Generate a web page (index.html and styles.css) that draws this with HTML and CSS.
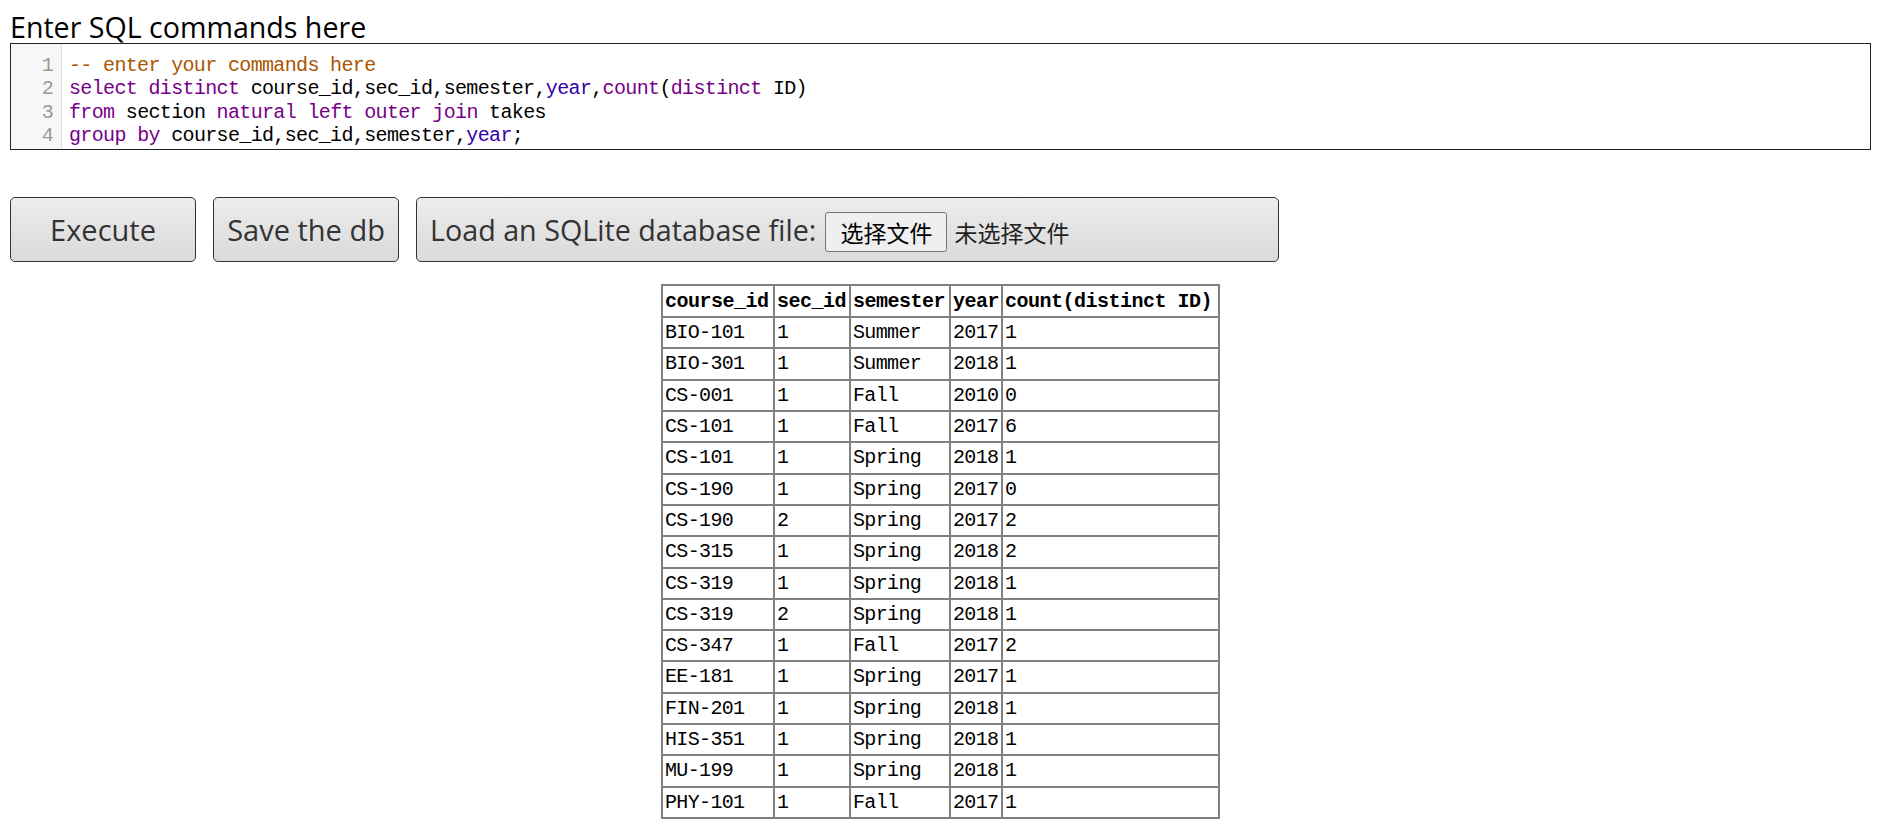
FILE: index.html
```html
<!DOCTYPE html>
<html lang="en">
<head>
<meta charset="utf-8">
<title>SQL runner</title>
<link rel="stylesheet" href="styles.css">
</head>
<body>
<label class="title" for="sql">Enter SQL commands here</label>
<div class="editor" id="sql">
  <div class="gutter">
    <div class="ln">1</div>
    <div class="ln">2</div>
    <div class="ln">3</div>
    <div class="ln">4</div>
  </div>
  <div class="code">
    <pre class="line"><span class="cm-comment">-- enter your commands here</span></pre>
    <pre class="line"><span class="cm-kw">select</span> <span class="cm-kw">distinct</span> course_id,sec_id,semester,<span class="cm-bi">year</span>,<span class="cm-kw">count</span>(<span class="cm-kw">distinct</span> ID)</pre>
    <pre class="line"><span class="cm-kw">from</span> section <span class="cm-kw">natural</span> <span class="cm-kw">left</span> <span class="cm-kw">outer</span> <span class="cm-kw">join</span> takes</pre>
    <pre class="line"><span class="cm-kw">group</span> <span class="cm-kw">by</span> course_id,sec_id,semester,<span class="cm-bi">year</span>;</pre>
  </div>
</div>

<div class="actions">
  <button class="btn btn-fixed" type="button">Execute</button>
  <button class="btn btn-fixed" type="button">Save the db</button>
  <label class="btn btn-load">
    <span class="load-text">Load an SQLite database file:</span>
    <span class="file-btn">选择文件</span>
    <span class="file-status">未选择文件</span>
  </label>
</div>

<table class="results">
  <thead>
    <tr><th>course_id</th><th>sec_id</th><th>semester</th><th>year</th><th>count(distinct ID)</th></tr>
  </thead>
  <tbody>
    <tr><td>BIO-101</td><td>1</td><td>Summer</td><td>2017</td><td>1</td></tr>
    <tr><td>BIO-301</td><td>1</td><td>Summer</td><td>2018</td><td>1</td></tr>
    <tr><td>CS-001</td><td>1</td><td>Fall</td><td>2010</td><td>0</td></tr>
    <tr><td>CS-101</td><td>1</td><td>Fall</td><td>2017</td><td>6</td></tr>
    <tr><td>CS-101</td><td>1</td><td>Spring</td><td>2018</td><td>1</td></tr>
    <tr><td>CS-190</td><td>1</td><td>Spring</td><td>2017</td><td>0</td></tr>
    <tr><td>CS-190</td><td>2</td><td>Spring</td><td>2017</td><td>2</td></tr>
    <tr><td>CS-315</td><td>1</td><td>Spring</td><td>2018</td><td>2</td></tr>
    <tr><td>CS-319</td><td>1</td><td>Spring</td><td>2018</td><td>1</td></tr>
    <tr><td>CS-319</td><td>2</td><td>Spring</td><td>2018</td><td>1</td></tr>
    <tr><td>CS-347</td><td>1</td><td>Fall</td><td>2017</td><td>2</td></tr>
    <tr><td>EE-181</td><td>1</td><td>Spring</td><td>2017</td><td>1</td></tr>
    <tr><td>FIN-201</td><td>1</td><td>Spring</td><td>2018</td><td>1</td></tr>
    <tr><td>HIS-351</td><td>1</td><td>Spring</td><td>2018</td><td>1</td></tr>
    <tr><td>MU-199</td><td>1</td><td>Spring</td><td>2018</td><td>1</td></tr>
    <tr><td>PHY-101</td><td>1</td><td>Fall</td><td>2017</td><td>1</td></tr>
  </tbody>
</table>
</body>
</html>
```

FILE: styles.css
```css
html, body {
  background: #ffffff;
}

body {
  margin: 0;
  padding: 10px;
  font-family: "Open Sans", "Noto Sans", sans-serif;
  color: #000;
}

.title {
  display: block;
  font-size: 28.6px;
  line-height: 33px;
  color: #000;
}

/* ---------- code editor ---------- */
.editor {
  display: flex;
  border: 1px solid #222;
  background: #fff;
  font-family: "Liberation Mono", "Noto Sans CJK SC", monospace;
  font-size: 20px;
  letter-spacing: -0.65px;
}

.gutter {
  width: 51px;
  box-sizing: border-box;
  flex: none;
  background: #f7f7f7;
  border-right: 1px solid #ddd;
  padding: 10px 8px 2px 0;
  text-align: right;
  color: #999;
}

.ln {
  line-height: 23.3px;
  height: 23.3px;
}

.code {
  flex: 1;
  padding: 10px 0 2px 7px;
}

.line {
  margin: 0;
  font: inherit;
  line-height: 23.3px;
  height: 23.3px;
  white-space: pre;
  color: #000;
}

.cm-comment { color: #a50; }
.cm-kw { color: #708; }
.cm-bi { color: #30a; }

/* ---------- buttons ---------- */
.actions {
  display: flex;
  gap: 17px;
  margin-top: 47px;
}

.btn {
  box-sizing: border-box;
  height: 65px;
  padding: 0 14px;
  border: 1px solid #333;
  border-radius: 5px;
  background: linear-gradient(#ececec, #dadada);
  font-family: "Open Sans", "Noto Sans", sans-serif;
  font-size: 29px;
  color: #333;
  cursor: pointer;
}

.btn-fixed {
  width: 186px;
  padding: 0;
  text-align: center;
}

.btn-load {
  display: flex;
  align-items: center;
  width: 863px;
  padding-left: 13px;
}

.load-text {
  white-space: nowrap;
  font-size: 28.7px;
}

.file-btn {
  box-sizing: border-box;
  height: 40px;
  margin: 5px 0 0 9px;
  padding: 0 14px;
  border: 1px solid #767676;
  border-radius: 3px;
  background: #efefef;
  font-family: "Noto Sans CJK SC", sans-serif;
  font-size: 23px;
  line-height: 38px;
  color: #000;
}

.file-status {
  margin: 5px 0 0 7px;
  font-family: "Noto Sans CJK SC", sans-serif;
  font-size: 23px;
  line-height: 38px;
  color: #222;
}

/* ---------- results table ---------- */
.results {
  margin: 22px auto 0;
  border-collapse: collapse;
  border: 2px solid #808080;
  font-family: "Liberation Mono", monospace;
  font-size: 20px;
  letter-spacing: -0.65px;
  color: #000;
}

.results th,
.results td {
  border: 2px solid #808080;
  padding: 0 2px;
  height: 29.3px;
  line-height: 29.3px;
  text-align: left;
  white-space: nowrap;
}

.results th {
  font-weight: bold;
  letter-spacing: -0.5px;
  height: 30px;
}

.results th:nth-child(1) { width: 106px; }
.results th:nth-child(2) { width: 70px; }
.results th:nth-child(3) { width: 94px; }
.results th:nth-child(4) { width: 46px; }
.results th:nth-child(5) { width: 211px; }
```
